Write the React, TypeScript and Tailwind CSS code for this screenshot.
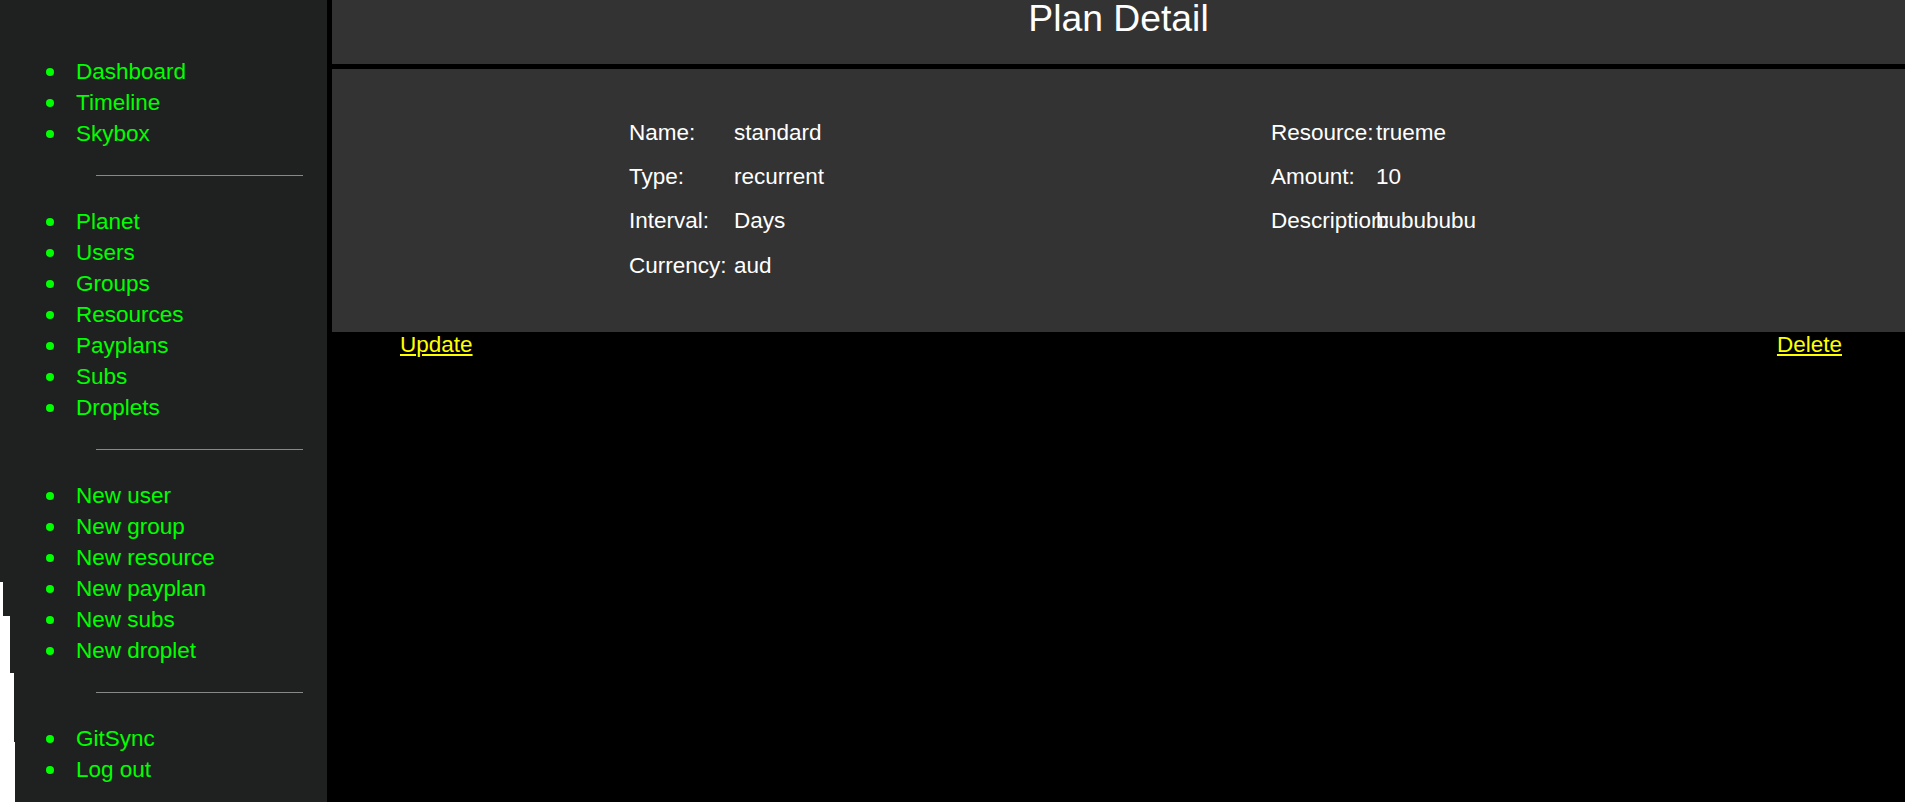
const NAV_GROUPS: string[][] = [
  ['Dashboard', 'Timeline', 'Skybox'],
  ['Planet', 'Users', 'Groups', 'Resources', 'Payplans', 'Subs', 'Droplets'],
  ['New user', 'New group', 'New resource', 'New payplan', 'New subs', 'New droplet'],
  ['GitSync', 'Log out'],
];

const LEFT_FIELDS = [
  { label: 'Name:', value: 'standard' },
  { label: 'Type:', value: 'recurrent' },
  { label: 'Interval:', value: 'Days' },
  { label: 'Currency:', value: 'aud' },
];

const RIGHT_FIELDS = [
  { label: 'Resource:', value: 'trueme' },
  { label: 'Amount:', value: '10' },
  { label: 'Description:', value: 'bubububu' },
];

function NavList({ items }: { items: string[] }) {
  return (
    <ul className="leading-[31px]">
      {items.map(item => (
        <li key={item} className="flex items-center h-[31px]">
          <span className="w-2 h-2 rounded-full bg-[#00ff00] ml-[46px] mr-[22px] shrink-0" />
          <a href="#" className="text-[#00ff00] whitespace-nowrap">{item}</a>
        </li>
      ))}
    </ul>
  );
}

function Sidebar() {
  return (
    <aside className="relative w-[327px] shrink-0 bg-[#1f2020] pt-[56px]">
      {NAV_GROUPS.map((group, i) => (
        <div key={i}>
          <NavList items={group} />
          {i < NAV_GROUPS.length - 1 && (
            <div className="h-px w-[207px] ml-[96px] mt-[26px] mb-[30px] bg-[#888888]" />
          )}
        </div>
      ))}

      <div className="absolute left-0 top-[582px] w-[3px] h-[34px] bg-white" />
      <div className="absolute left-0 top-[616px] w-[10px] h-[57px] bg-white" />
      <div className="absolute left-0 top-[673px] w-[14px] h-[69px] bg-white" />
      <div className="absolute left-0 top-[742px] w-[15px] h-[60px] bg-white" />
    </aside>
  );
}

function FieldBlock({ fields }: { fields: { label: string; value: string }[] }) {
  return (
    <div className="leading-[44.2px]">
      {fields.map(f => (
        <div key={f.label} className="flex whitespace-nowrap">
          <span className="w-[105px] shrink-0 overflow-visible">{f.label}</span>
          <span>{f.value}</span>
        </div>
      ))}
    </div>
  );
}

export default function App() {
  return (
    <div className="flex h-[802px] w-[1913px] overflow-hidden bg-black text-[22.5px] font-['Liberation_Sans',Arial,sans-serif]">
      <Sidebar />

      <main className="ml-[5px] w-[1573px] shrink-0 flex flex-col">
        <header className="h-[64px] bg-[#333333] text-white text-center text-[37.3px] leading-[36px]">
          Plan Detail
        </header>

        <section className="mt-[5px] h-[263px] bg-[#333333] text-white flex pt-[42px]">
          <div className="ml-[297px] w-[642px]">
            <FieldBlock fields={LEFT_FIELDS} />
          </div>
          <div>
            <FieldBlock fields={RIGHT_FIELDS} />
          </div>
        </section>

        <div className="flex justify-between pl-[68px] pr-[63px] leading-[26px]">
          <a href="#" className="text-[#ffff00] underline">Update</a>
          <a href="#" className="text-[#ffff00] underline">Delete</a>
        </div>
      </main>

      <div className="w-[8px] shrink-0 bg-white" />
    </div>
  );
}
